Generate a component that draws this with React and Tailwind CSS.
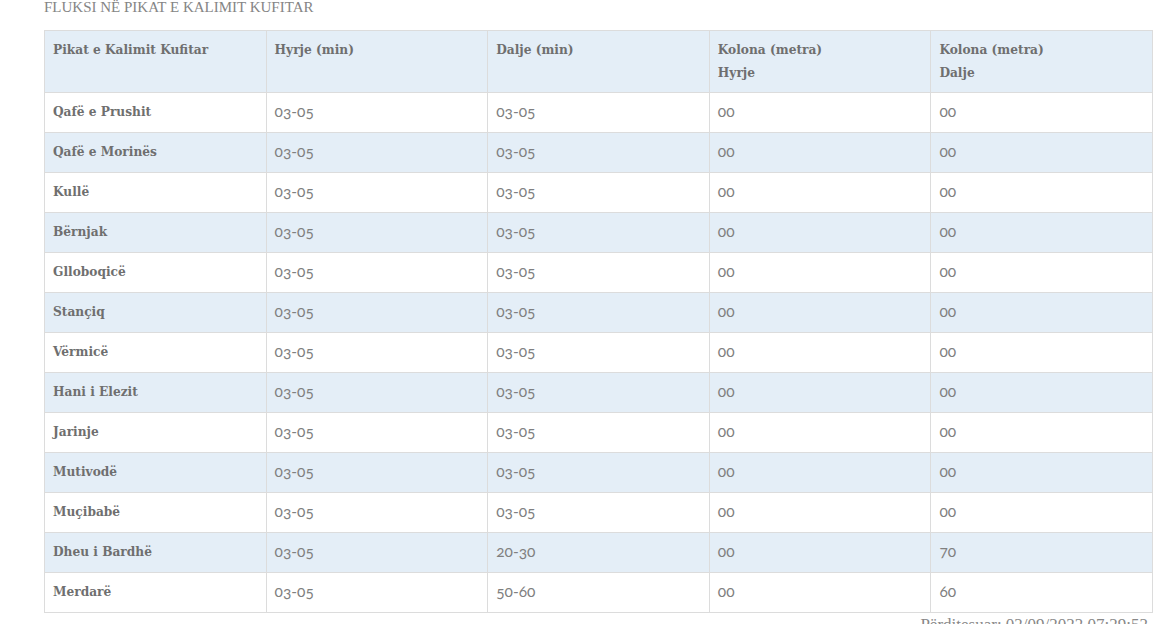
import React from 'react';

const rows = [
    ['Qafë e Prushit', '03-05', '03-05', '00', '00'],
    ['Qafë e Morinës', '03-05', '03-05', '00', '00'],
    ['Kullë', '03-05', '03-05', '00', '00'],
    ['Bërnjak', '03-05', '03-05', '00', '00'],
    ['Glloboqicë', '03-05', '03-05', '00', '00'],
    ['Stançiq', '03-05', '03-05', '00', '00'],
    ['Vërmicë', '03-05', '03-05', '00', '00'],
    ['Hani i Elezit', '03-05', '03-05', '00', '00'],
    ['Jarinje', '03-05', '03-05', '00', '00'],
    ['Mutivodë', '03-05', '03-05', '00', '00'],
    ['Muçibabë', '03-05', '03-05', '00', '00'],
    ['Dheu i Bardhë', '03-05', '20-30', '00', '70'],
    ['Merdarë', '03-05', '50-60', '00', '60'],
];

const slab = "font-['DejaVu_Serif',serif]";

const App = () => {
    return (
        <div className="w-[1175px] h-[624px] overflow-hidden bg-white">
            <div className="ml-[44px] w-[1109px]">
                <h2 className="font-['Liberation_Serif',serif] text-[15px] leading-[14px] text-[#858585] mb-[16px]">
                    FLUKSI NË PIKAT E KALIMIT KUFITAR
                </h2>
                <table className="w-full table-fixed border-collapse border border-[#dcdcdc] text-[#777]">
                    <thead>
                        <tr className="bg-[#e4eef7] h-[62px] align-top">
                            {['Pikat e Kalimit Kufitar', 'Hyrje (min)', 'Dalje (min)', ['Kolona (metra)', 'Hyrje'], ['Kolona (metra)', 'Dalje']].map((h, i) => (
                                <th key={i} className={`${slab} text-left font-bold text-[12.2px] leading-[23px] text-[#6f6f6f] px-[8px] pt-[8px] border border-[#dcdcdc]`}>
                                    {Array.isArray(h) ? (<>{h[0]}<br />{h[1]}</>) : h}
                                </th>
                            ))}
                        </tr>
                    </thead>
                    <tbody>
                        {rows.map((r, i) => (
                            <tr key={i} className={`h-[40px] ${i % 2 === 1 ? 'bg-[#e4eef7]' : 'bg-white'}`}>
                                <td className={`${slab} font-bold text-[12.2px] text-[#6f6f6f] px-[8px] pb-[1px] border border-[#dcdcdc]`}>{r[0]}</td>
                                {r.slice(1).map((c, j) => (
                                    <td key={j} className="font-['Lato',sans-serif] oldstyle-nums text-[15.5px] text-[#808080] px-[8px] pb-[2px] border border-[#dcdcdc]">{c}</td>
                                ))}
                            </tr>
                        ))}
                    </tbody>
                </table>
                <div className="text-right pr-[5px] pt-[2px] font-['Liberation_Serif',serif] text-[17px] leading-[20px] text-[#888]">
                    Përditesuar: 02/09/2022 07:29:52
                </div>
            </div>
        </div>
    );
};

export default App;
